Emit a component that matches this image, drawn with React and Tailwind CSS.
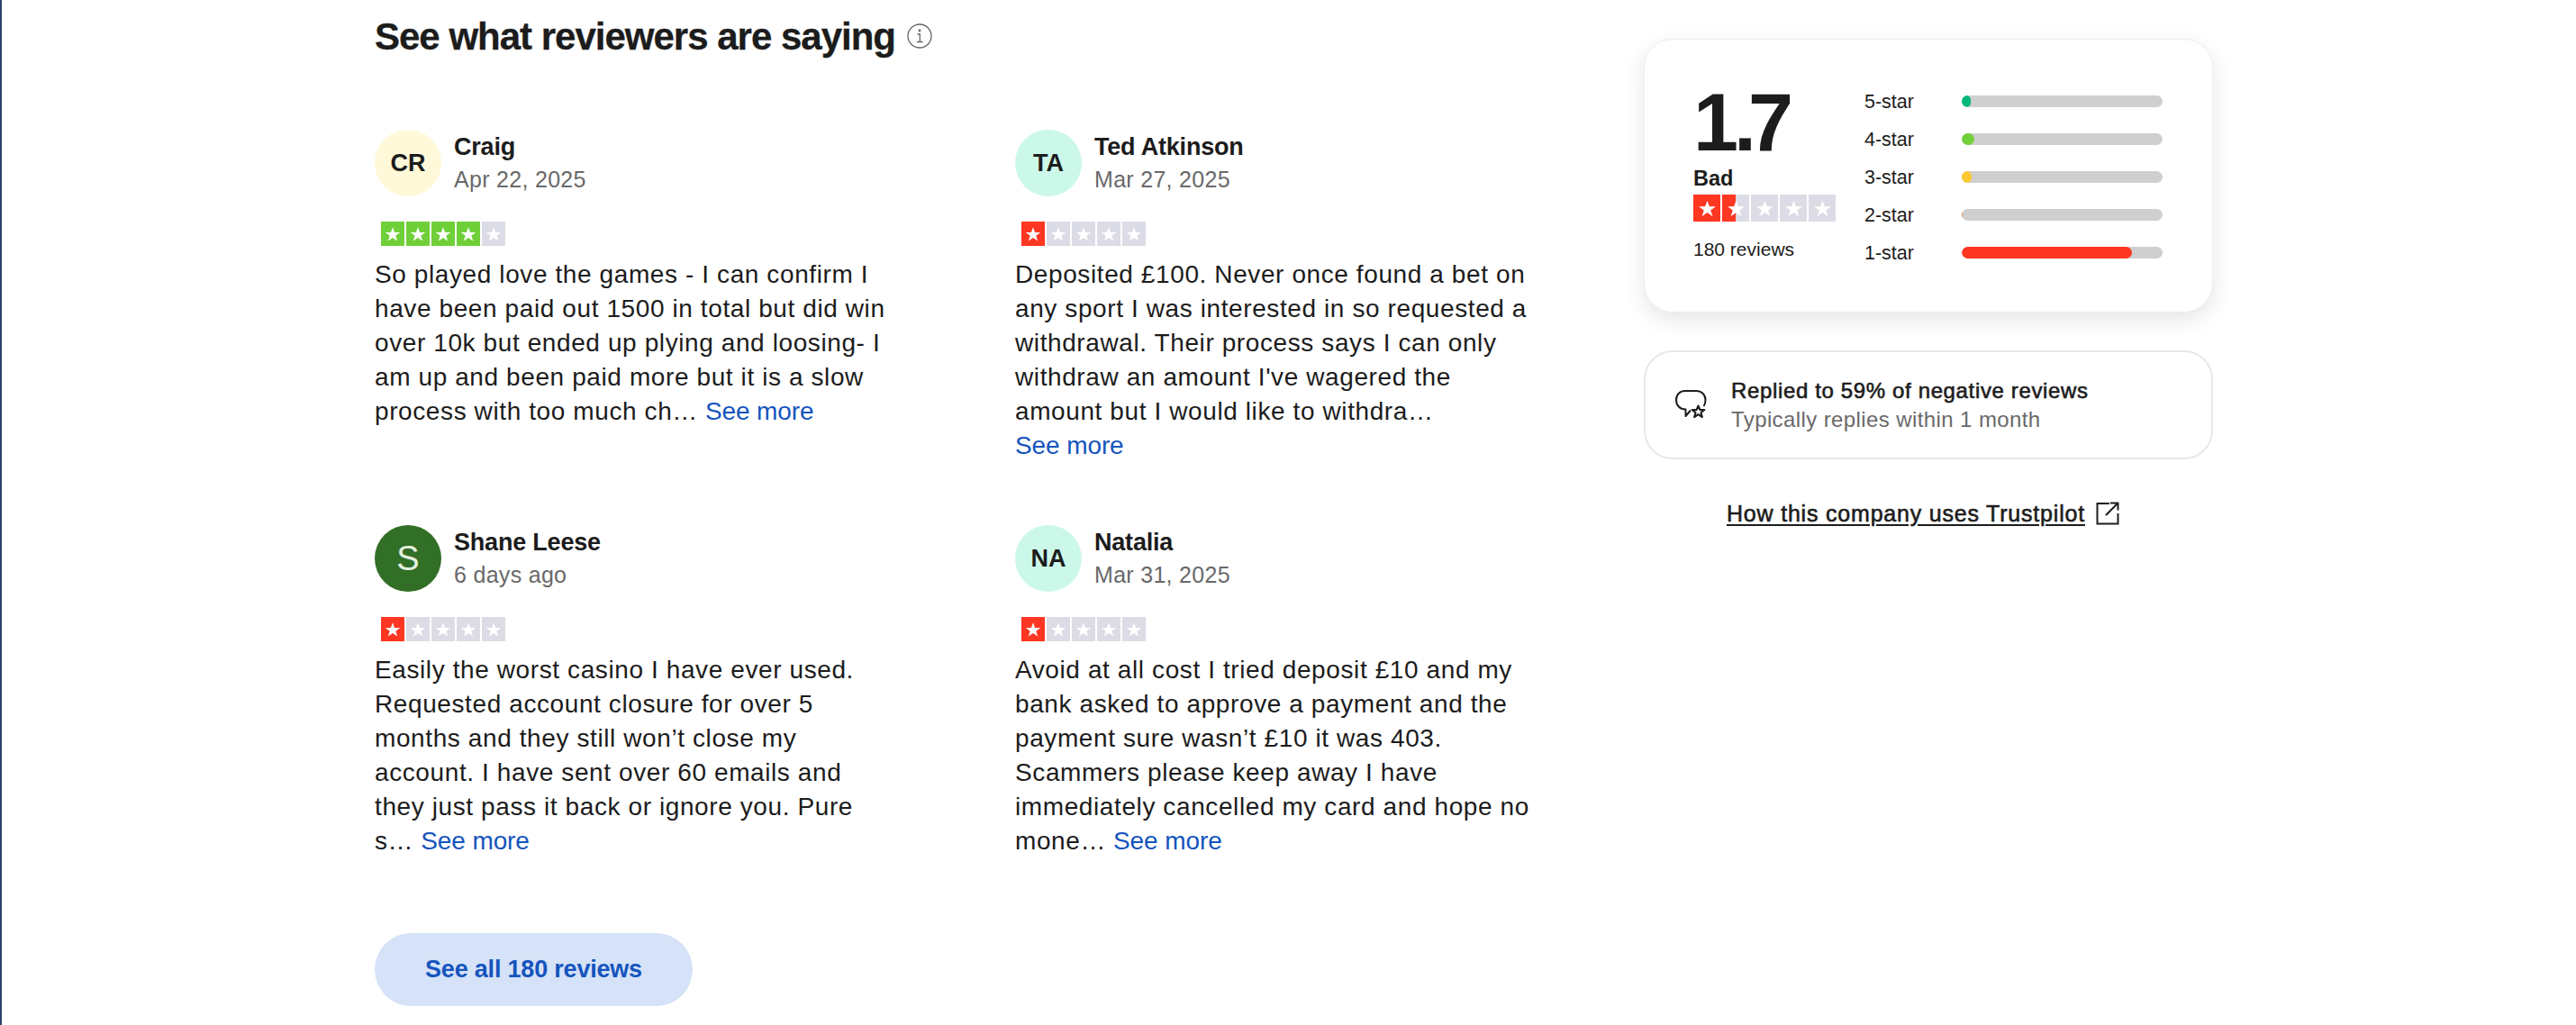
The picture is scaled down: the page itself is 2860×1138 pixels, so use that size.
import React from 'react';

const FONT = "font-['Liberation_Sans',Arial,sans-serif]";

const reviews = [
  {
    initials: 'CR', avatar: 'bg-[#fff9d9] text-[#1c1c1c] font-bold', name: 'Craig', date: 'Apr 22, 2025', stars: 4,
    lines: ['So played love the games - I can confirm I', 'have been paid out 1500 in total but did win', 'over 10k but ended up plying and loosing- I', 'am up and been paid more but it is a slow', 'process with too much ch…'],
  },
  {
    initials: 'TA', avatar: 'bg-[#ccf8ea] text-[#1c1c1c] font-bold', name: 'Ted Atkinson', date: 'Mar 27, 2025', stars: 1,
    lines: ['Deposited £100. Never once found a bet on', 'any sport I was interested in so requested a', 'withdrawal. Their process says I can only', "withdraw an amount I've wagered the", 'amount but I would like to withdra…'],
    moreBelow: true,
  },
  {
    initials: 'S', avatar: 'bg-[#326f26] text-[#e4f0e0] font-normal text-[38px]', name: 'Shane Leese', date: '6 days ago', stars: 1,
    lines: ['Easily the worst casino I have ever used.', 'Requested account closure for over 5', 'months and they still won’t close my', 'account. I have sent over 60 emails and', 'they just pass it back or ignore you. Pure', 's…'],
  },
  {
    initials: 'NA', avatar: 'bg-[#ccf8ea] text-[#1c1c1c] font-bold', name: 'Natalia', date: 'Mar 31, 2025', stars: 1,
    lines: ['Avoid at all cost I tried deposit £10 and my', 'bank asked to approve a payment and the', 'payment sure wasn’t £10 it was 403.', 'Scammers please keep away I have', 'immediately cancelled my card and hope no', 'mone…'],
  },
];

const distribution = [
  { label: '5-star', width: 10, color: 'bg-[#00b67a]' },
  { label: '4-star', width: 14, color: 'bg-[#73cf3a]' },
  { label: '3-star', width: 11, color: 'bg-[#fdc92f]' },
  { label: '2-star', width: 1, color: 'bg-[#ff8622]' },
  { label: '1-star', width: 189, color: 'bg-[#ff3722]' },
];

const StarGlyph = ({ className }) => (
  <svg viewBox="0 0 24 24" className={className}>
    <path fill="#fff" d="M12 3.6l2.3 6.3h6.700l-5.400 3.900 2.100 6.500L12 16.300l-5.700 4 2.100-6.500L3 9.900h6.700z" />
  </svg>
);

const SmallStars = ({ count }) => {
  const on = count === 4 ? 'bg-[#6fcf38]' : 'bg-[#ff3722]';
  return (
    <div className="ml-[7px] flex gap-[2px]">
      {[1, 2, 3, 4, 5].map((n) => (
        <div key={n} className={`flex h-[27px] w-[26px] items-center justify-center ${n <= count ? on : 'bg-[#dcdce6]'}`}>
          <StarGlyph className="h-[22px] w-[22px]" />
        </div>
      ))}
    </div>
  );
};

const OverallStars = () => (
  <div className="flex gap-[2px]">
    {[1, 2, 3, 4, 5].map((n) => (
      <div key={n} className={`relative flex h-[30px] w-[30px] items-center justify-center ${n === 1 ? 'bg-[#ff3722]' : 'bg-[#dcdce6]'}`}>
        {n === 2 && <div className="absolute inset-y-0 left-0 w-[15px] bg-[#ff3722]" />}
        <StarGlyph className="relative h-[25px] w-[25px]" />
      </div>
    ))}
  </div>
);

const ReviewCard = ({ review }) => (
  <article className="w-[711px]">
    <div className="flex items-start">
      <div className={`flex h-[74px] w-[74px] items-center justify-center rounded-full text-[27px] ${review.avatar}`}>
        {review.initials}
      </div>
      <div className="ml-[14px]">
        <div className="text-[27px] leading-[38px] font-bold tracking-[-0.2px] text-[#1c1c1c]">{review.name}</div>
        <div className="mt-[-1px] text-[25px] leading-[36px] tracking-[0.3px] text-[#696969]">{review.date}</div>
      </div>
    </div>
    <div className="mt-[28px]"><SmallStars count={review.stars} /></div>
    <div className="mt-[13px] text-[28px] leading-[38px] tracking-[0.6px] text-[#1c1c1c]">
      {review.lines.map((line, i) => (
        <div key={i} className="whitespace-nowrap">
          {line}
          {i === review.lines.length - 1 && !review.moreBelow && <span className="ml-[8px] tracking-[-0.1px] text-[#1554bd]">See more</span>}
        </div>
      ))}
      {review.moreBelow && <div className="tracking-[-0.1px] text-[#1554bd]">See more</div>}
    </div>
  </article>
);

const App = () => (
  <div className={`${FONT} flex h-[1138px] w-[2860px] overflow-hidden border-l-[2px] border-[#2c4468] bg-white`}>
    <main className="ml-[414px] flex items-start">
      <section className="w-[1409px]">
        <h2 className="mt-[16px] flex items-center text-[42px] leading-[50px] font-bold tracking-[-1px] text-[#1c1c1c] [-webkit-text-stroke:0.3px_#1c1c1c]">
          See what reviewers are saying
          <svg viewBox="0 0 28 28" className="mt-[-2px] ml-[13px] h-[28px] w-[28px]" fill="none" stroke="#666666" strokeWidth="1.3">
            <circle cx="14" cy="14" r="13" />
            <path d="M11.500 12h2.800v8M11 20.500h6.500" />
            <circle cx="14" cy="8" r="0.8" fill="#666666" />
          </svg>
        </h2>
        <div className="mt-[78px] grid grid-cols-[711px_711px] gap-y-[69px]">
          {reviews.map((r) => <ReviewCard key={r.name} review={r} />)}
        </div>
        <button className="mt-[83px] flex h-[81px] w-[353px] items-center justify-center rounded-full bg-[#d5e2f8] text-[27px] font-bold tracking-[-0.2px] text-[#1554bd]">
          See all 180 reviews
        </button>
      </section>

      <aside className="mt-[43px] w-[632px]">
        <div className="flex h-[304px] rounded-[32px] border border-[#eeeeea] bg-white pt-[52px] pl-[54px] shadow-[0_8px_24px_rgba(0,0,0,0.10)]">
          <div className="w-[190px]">
            <div className="h-[80px] text-[90px] leading-[80px] font-bold text-[#1c1c1c]">
              <span className="tracking-[-5px]">1</span>
              <span className="tracking-[-9px]">.</span>
              <span>7</span>
            </div>
            <div className="mt-[9px] text-[23.500px] leading-[26px] font-bold text-[#1c1c1c]">Bad</div>
            <div className="mt-[5px]"><OverallStars /></div>
            <div className="mt-[17px] text-[21px] leading-[28px] text-[#1c1c1c]">180 reviews</div>
          </div>
          <div className="flex flex-col gap-[14px] pt-[2px]">
            {distribution.map((row) => (
              <div key={row.label} className="flex h-[28px] items-center">
                <span className="w-[108px] pt-[2px] text-[21.500px] text-[#1c1c1c]">{row.label}</span>
                <div className="h-[13px] w-[223px] overflow-hidden rounded-full bg-[#cfcfcf]">
                  <div className={`h-full rounded-full ${row.color}`} style={{ width: row.width }} />
                </div>
              </div>
            ))}
          </div>
        </div>

        <div className="mt-[42px] flex h-[121px] items-center rounded-[32px] border-2 border-[#e8e8e4] pl-[33px]">
          <svg viewBox="0 0 36 32" className="mt-[-2px] h-[32px] w-[36px]" fill="none" stroke="#1c1c1c" strokeWidth="2" strokeLinejoin="round">
            <path d="M17 22.500L11.500 29V21.500C5 21.500 1 17 1 11C1 5 5 1 11 1H23C29 1 33.500 5 33.500 11C33.500 14 33 16 31.500 18" />
            <path d="M25.500 17.500l1.900 4.500h5l-4 3.100 1.500 5-4.400-3-4.400 3 1.500-5-4-3.100h5z" />
          </svg>
          <div className="ml-[26px]">
            <div className="text-[24px] leading-[32px] font-normal tracking-[0.64px] text-[#1c1c1c] [-webkit-text-stroke:0.6px_#1c1c1c]">Replied to 59% of negative reviews</div>
            <div className="text-[24px] leading-[32px] tracking-[0.4px] text-[#696969]">Typically replies within 1 month</div>
          </div>
        </div>

        <div className="mt-[43px] flex items-center justify-center pr-[12px]">
          <a className="text-[25px] leading-[34px] font-normal tracking-[0.8px] text-[#1c1c1c] underline underline-offset-[3px] [-webkit-text-stroke:0.6px_#1c1c1c]">How this company uses Trustpilot</a>
          <svg viewBox="0 0 26 26" className="ml-[12px] h-[26px] w-[26px]" fill="none" stroke="#1c1c1c" strokeWidth="2">
            <path d="M15 2H1.500v22.500H24.500V13" />
            <path d="M11 15L24 2M16 1.500h8.500v8" />
          </svg>
        </div>
      </aside>
    </main>
  </div>
);

export default App;
